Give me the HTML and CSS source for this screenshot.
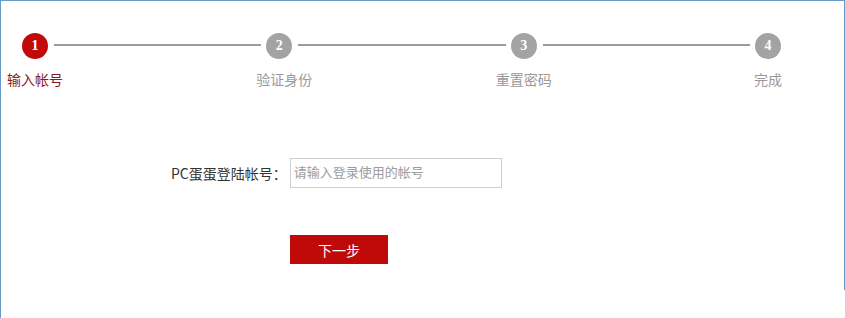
FILE: index.html
```html
<!DOCTYPE html>
<html lang="zh-CN">
<head>
    <meta charset="UTF-8">
    <title>找回密码 - 输入帐号</title>
    <link rel="stylesheet" href="styles.css">
</head>
<body>
    <div class="page">
        <div class="panel">
            <div class="steps">
                <span class="step-num active">1</span>
                <span class="step-line"></span>
                <span class="step-num">2</span>
                <span class="step-line"></span>
                <span class="step-num">3</span>
                <span class="step-line"></span>
                <span class="step-num">4</span>

                <span class="step-label active">输入帐号</span>
                <span class="step-label">验证身份</span>
                <span class="step-label">重置密码</span>
                <span class="step-label">完成</span>
            </div>

            <div class="form-row">
                <label class="form-label" for="account">PC蛋蛋登陆帐号：</label>
                <input class="form-input" id="account" type="text" placeholder="请输入登录使用的帐号">
            </div>
            <div class="btn-row">
                <button class="btn-next" type="button">下一步</button>
            </div>
        </div>
    </div>
</body>
</html>
```

FILE: styles.css
```css
body {
    margin: 0;
    font-family: "Noto Sans CJK SC", "Liberation Sans", sans-serif;
    color: #333;
    background-color: #fff;
}
.page {
    width: 844px;
    height: 318px;
    border-left: 1px solid #6a9bc6;
}
.panel {
    height: 289px;
    border-top: 1px solid #6a9bc6;
    border-right: 1px solid #6a9bc6;
}
.steps {
    display: grid;
    grid-template-columns: 26px 1fr 26px 1fr 26px 1fr 26px;
    grid-template-rows: 26px auto;
    row-gap: 10px;
    width: 759px;
    margin: 32px 0 0 21px;
}
.step-num {
    width: 26px;
    height: 26px;
    border-radius: 50%;
    background-color: #a3a3a3;
    color: #fff;
    font-family: "Liberation Serif", serif;
    font-weight: bold;
    font-size: 14px;
    line-height: 26px;
    text-align: center;
}
.step-num.active {
    background-color: #c00a0a;
}
.step-line {
    height: 2px;
    margin: 11px 5px 0 6px;
    background-color: #9c9c9c;
}
.step-label {
    grid-row: 2;
    display: flex;
    justify-content: center;
    white-space: nowrap;
    font-size: 14px;
    line-height: 20px;
    color: #9a9a9a;
}
.step-label:nth-of-type(8) { grid-column: 1; }
.step-label:nth-of-type(9) { grid-column: 3; padding-left: 10px; }
.step-label:nth-of-type(10) { grid-column: 5; }
.step-label:nth-of-type(11) { grid-column: 7; }
.step-label.active {
    color: #8e1717;
}
.form-row {
    display: flex;
    align-items: center;
    margin-top: 69px;
    padding-left: 170px;
}
.form-label {
    font-size: 14px;
    margin-right: 3px;
    color: #333;
}
.form-input {
    box-sizing: border-box;
    width: 212px;
    height: 30px;
    margin: 0;
    padding: 0 3px 4px;
    border: 1px solid #cfcfcf;
    font-family: inherit;
    font-size: 13px;
    outline: none;
}
.form-input::placeholder {
    color: #9c9c9c;
}
.btn-row {
    margin-top: 47px;
    padding-left: 289px;
}
.btn-next {
    width: 98px;
    height: 29px;
    border: none;
    background-color: #c00a0a;
    color: #fff;
    font-family: inherit;
    font-size: 14px;
    cursor: pointer;
}
```
